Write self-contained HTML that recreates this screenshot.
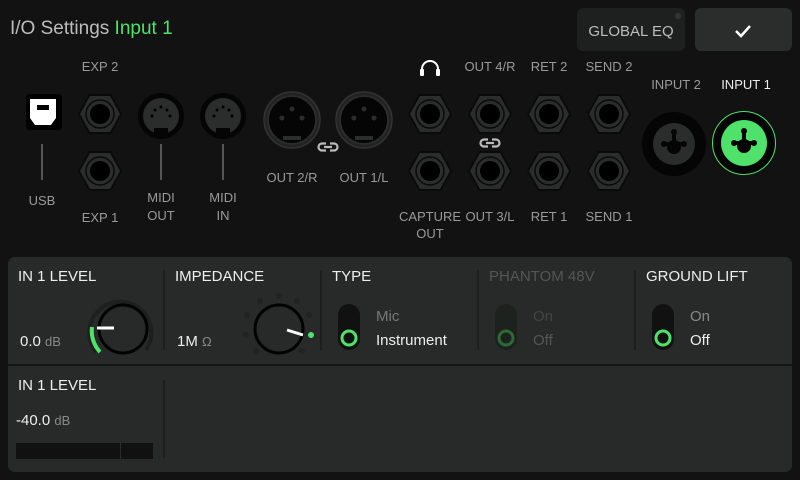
<!DOCTYPE html>
<html><head><meta charset="utf-8"><style>
html,body{margin:0;padding:0;background:#121212;width:800px;height:480px;overflow:hidden}
svg{display:block}
text{font-family:"Liberation Sans",sans-serif}
</style></head><body>
<svg width="800" height="480" viewBox="0 0 800 480" xmlns="http://www.w3.org/2000/svg">
<defs>
<g id="jack"><polygon points="-22,0 -11,-20 11,-20 22,0 11,20 -11,20" fill="#0a0a0a"/><polygon points="-20,0 -10,-18 10,-18 20,0 10,18 -10,18" fill="#2a2d2b"/><circle r="14" fill="#2a2d2b" stroke="#0a0a0a" stroke-width="1.5"/><circle r="10" fill="#000"/></g>
<g id="midi"><circle r="23" fill="#050505"/><circle r="18" fill="#2a2d2b"/><rect x="-7" y="12" width="14" height="7" fill="#050505"/><g fill="#000"><circle cx="-9" cy="0" r="1.5"/><circle cx="9" cy="0" r="1.5"/><circle cx="0" cy="-9" r="1.5"/><circle cx="-6" cy="-6" r="1.5"/><circle cx="6" cy="-6" r="1.5"/></g></g>
<g id="xlr"><circle r="28" fill="#222" stroke="#333" stroke-width="1.5"/><circle r="24" fill="#050505" stroke="#2a2d2b" stroke-width="2"/><g fill="#2a2d2b"><circle cx="-10" cy="-2" r="2.5"/><circle cx="10" cy="-2" r="2.5"/><circle cx="0" cy="-11" r="2.5"/></g><rect x="-9" y="16" width="18" height="4" fill="#2a2d2b"/></g>
<g id="link" fill="none" stroke="#bbb" stroke-width="2.2"><path d="M-2 -3.5 H-6 A3.5 3.5 0 0 0 -6 3.5 H-2"/><path d="M2 -3.5 H6 A3.5 3.5 0 0 1 6 3.5 H2"/><line x1="-4" y1="0" x2="4" y2="0"/></g>
</defs>
<text x="10" y="34" font-size="19" fill="#bdbdbd">I/O Settings <tspan fill="#4ee26a">Input 1</tspan></text>
<rect x="577" y="8" width="108" height="43" rx="6" fill="#1e201f"/>
<circle cx="678" cy="16" r="3" fill="#333"/>
<text x="631" y="36" font-size="15" fill="#bdbdbd" text-anchor="middle">GLOBAL EQ</text>
<rect x="695" y="8" width="97" height="43" rx="6" fill="#2a2d2b"/>
<path d="M736 31 L741 36 L750 26" stroke="#fff" stroke-width="2.5" fill="none"/>
<g font-size="13" fill="#9a9a9a" text-anchor="middle">
<text x="100" y="71">EXP 2</text><text x="100" y="222">EXP 1</text>
<text x="42" y="205">USB</text>
<text x="161" y="202">MIDI</text><text x="161" y="220">OUT</text>
<text x="223" y="202">MIDI</text><text x="223" y="220">IN</text>
<text x="292" y="182">OUT 2/R</text><text x="364" y="182">OUT 1/L</text>
<text x="490" y="71">OUT 4/R</text><text x="549" y="71">RET 2</text><text x="609" y="71">SEND 2</text>
<text x="430" y="221">CAPTURE</text><text x="430" y="238">OUT</text>
<text x="490" y="221">OUT 3/L</text><text x="549" y="221">RET 1</text><text x="609" y="221">SEND 1</text>
<text x="676" y="89">INPUT 2</text><text x="746" y="89" fill="#eee">INPUT 1</text>
</g>
<rect x="26" y="94" width="36" height="36" rx="4" fill="#000"/>
<path d="M30 99 H56 V118 L51 125 H35 L30 118 Z" fill="#fff"/>
<rect x="37" y="105" width="12" height="5" fill="#000"/>
<g stroke="#555" stroke-width="2"><line x1="42" y1="144" x2="42" y2="180"/><line x1="161" y1="144" x2="161" y2="180"/><line x1="223" y1="144" x2="223" y2="180"/></g>
<use href="#jack" x="100" y="114"/><use href="#jack" x="100" y="171"/>
<use href="#midi" x="161" y="116"/><use href="#midi" x="223" y="116"/>
<use href="#xlr" x="292" y="120"/><use href="#xlr" x="364" y="120"/>
<use href="#link" x="328" y="147"/><use href="#link" x="490" y="143"/>
<path d="M422 74 V69 A8 8 0 0 1 438 69 V74" fill="none" stroke="#fff" stroke-width="2"/>
<rect x="420" y="69" width="4" height="7" rx="1" fill="#fff"/><rect x="436" y="69" width="4" height="7" rx="1" fill="#fff"/>
<use href="#jack" x="430" y="114"/><use href="#jack" x="490" y="114"/><use href="#jack" x="549" y="114"/><use href="#jack" x="609" y="114"/>
<use href="#jack" x="430" y="171"/><use href="#jack" x="490" y="171"/><use href="#jack" x="549" y="171"/><use href="#jack" x="609" y="171"/>
<circle cx="674" cy="144" r="32" fill="#050505"/><circle cx="674" cy="144" r="21" fill="#2a2d2b"/>
<g fill="#050505"><circle cx="674" cy="147" r="7"/><circle cx="674" cy="132" r="3"/><circle cx="664" cy="144" r="3"/><circle cx="684" cy="144" r="3"/><rect x="672" y="132" width="4" height="10"/><rect x="664" y="142" width="20" height="4"/></g>
<circle cx="744" cy="143" r="31.5" fill="#050505" stroke="#4ee26a" stroke-width="1"/><circle cx="744" cy="143" r="23" fill="#4ee26a"/>
<g fill="#050505"><circle cx="744" cy="146" r="7"/><circle cx="744" cy="131" r="3"/><circle cx="734" cy="143" r="3"/><circle cx="754" cy="143" r="3"/><rect x="742" y="131" width="4" height="10"/><rect x="734" y="141" width="20" height="4"/></g>
<rect x="8" y="257" width="784" height="215" rx="7" fill="#272a28"/>
<rect x="8" y="364" width="784" height="2" fill="#151715"/>
<g stroke="#1a211b" stroke-width="2"><line x1="164" y1="270" x2="164" y2="350"/><line x1="321" y1="270" x2="321" y2="350"/><line x1="478" y1="270" x2="478" y2="350"/><line x1="635" y1="270" x2="635" y2="350"/><line x1="164" y1="380" x2="164" y2="458"/></g>
<g font-size="15" fill="#eee">
<text x="18" y="281">IN 1 LEVEL</text><text x="175" y="281">IMPEDANCE</text><text x="332" y="281">TYPE</text>
<text x="489" y="281" fill="#555">PHANTOM 48V</text><text x="646" y="281">GROUND LIFT</text>
<text x="18" y="390">IN 1 LEVEL</text>
<text x="20" y="346">0.0 <tspan font-size="13" fill="#888">dB</tspan></text>
<text x="177" y="346">1M <tspan font-size="13" fill="#888">Ω</tspan></text>
<text x="16" y="425">-40.0 <tspan font-size="13" fill="#888">dB</tspan></text>
<text x="376" y="321" fill="#777">Mic</text><text x="376" y="345">Instrument</text>
<text x="533" y="321" fill="#444">On</text><text x="533" y="345" fill="#555">Off</text>
<text x="690" y="321" fill="#888">On</text><text x="690" y="345">Off</text>
</g>
<path d="M96 352 A31 31 0 1 1 146 350" fill="none" stroke="#1e201f" stroke-width="4"/>
<path d="M92 327 A31 31 0 0 0 100 352" fill="none" stroke="#4ee26a" stroke-width="4"/>
<circle cx="123" cy="329" r="24" fill="#272a28" stroke="#000" stroke-width="3"/>
<line x1="97" y1="328" x2="114" y2="328" stroke="#fff" stroke-width="3"/>
<g fill="#1e241f"><circle cx="279" cy="296" r="3"/><circle cx="260" cy="301" r="3"/><circle cx="297" cy="301" r="3"/><circle cx="247" cy="315" r="3"/><circle cx="309" cy="315" r="3"/><circle cx="246" cy="335" r="3"/><circle cx="256" cy="351" r="3"/><circle cx="302" cy="351" r="3"/></g>
<circle cx="311" cy="335" r="3" fill="#4ee26a"/>
<circle cx="279" cy="329" r="24" fill="#272a28" stroke="#000" stroke-width="3"/>
<line x1="287" y1="330" x2="303" y2="335" stroke="#fff" stroke-width="3"/>
<rect x="338" y="304" width="22" height="46" rx="11" fill="#111"/>
<circle cx="349" cy="338" r="7" fill="none" stroke="#4ee26a" stroke-width="3"/>
<rect x="495" y="304" width="22" height="46" rx="11" fill="#1e221f"/>
<circle cx="506" cy="338" r="7" fill="none" stroke="#2b6b36" stroke-width="3"/>
<rect x="652" y="304" width="22" height="46" rx="11" fill="#111"/>
<circle cx="663" cy="338" r="7" fill="none" stroke="#4ee26a" stroke-width="3"/>
<rect x="16" y="443" width="137" height="16" fill="#111"/>
<line x1="120.5" y1="443" x2="120.5" y2="459" stroke="#2a2d2b" stroke-width="1"/>
</svg>
</body></html>
